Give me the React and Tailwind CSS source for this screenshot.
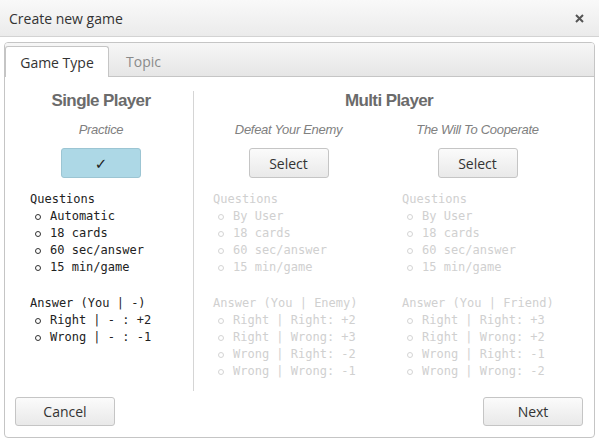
import React from "react";

const mono = { fontFamily: '"DejaVu Sans Mono", "Liberation Mono", monospace' };

function Item({ children, faded }) {
  return (
    <div className="flex items-center h-[17px]">
      <span
        className={
          "ml-[5px] w-[6px] h-[6px] rounded-full border " +
          (faded ? "border-[#d4d4d4]" : "border-[#333]")
        }
      />
      <span className="ml-[9px] whitespace-pre">{children}</span>
    </div>
  );
}

function Info({ faded, items, answerHead, answers }) {
  return (
    <div
      className={"text-[12px] leading-[17px] " + (faded ? "text-[#d0d0d0]" : "text-[#222]")}
      style={mono}
    >
      <div className="h-[17px] whitespace-pre">Questions</div>
      {items.map((t) => (
        <Item key={t} faded={faded}>{t}</Item>
      ))}
      <div className="h-[17px] mt-[19px] whitespace-pre">{answerHead}</div>
      {answers.map((t) => (
        <Item key={t} faded={faded}>{t}</Item>
      ))}
    </div>
  );
}

function Btn({ children, className = "" }) {
  return (
    <div
      className={
        "flex items-center justify-center rounded-[3px] border border-[#c5c5c5] bg-gradient-to-b from-[#fbfbfb] to-[#e9e9e9] text-[14px] text-[#333] " +
        className
      }
    >
      {children}
    </div>
  );
}

export default function App() {
  return (
    <div
      className="w-[599px] h-[442px] bg-white overflow-hidden"
      style={{ fontFamily: '"Open Sans", "DejaVu Sans", sans-serif' }}
    >
      <div className="h-[37px] border-b border-[#d3d3d3] bg-gradient-to-b from-[#f9f9f9] to-[#ebebeb] flex items-center justify-between pl-[9px] pr-[15px]">
        <span className="text-[14px] text-[#333]">Create new game</span>
        <svg width="9" height="9" viewBox="0 0 9 9">
          <path d="M1 1L8 8M8 1L1 8" stroke="#555" strokeWidth="2" />
        </svg>
      </div>

      <div className="ml-[4px] mt-[5px] w-[591px] h-[396px] border border-[#c5c5c5] rounded-[4px] flex flex-col">
        <div className="h-[34px] flex items-end border-b border-[#c5c5c5] bg-gradient-to-b from-[#f6f6f6] to-[#e6e6e6] rounded-t-[3px]">
          <div className="-mb-px h-[31px] w-[104px] bg-white border border-b-0 border-[#c5c5c5] rounded-t-[3px] flex items-center justify-center text-[14px] text-[#333]">
            Game Type
          </div>
          <div className="-mb-px h-[31px] ml-[2px] px-[15px] flex items-center text-[14px] text-[#8a8a8a]">
            Topic
          </div>
        </div>

        <div className="flex mt-[14px] h-[300px]">
          <div className="w-[189px] border-r border-[#d5d5d5] pl-[4px] flex flex-col">
            <div
              className="h-[20px] leading-[20px] text-center text-[17px] font-bold text-[#6b6b6b] tracking-[-0.6px]"
              style={{ fontFamily: '"Liberation Sans", Arial, sans-serif' }}
            >
              Single Player
            </div>
            <div
              className="mt-[10px] h-[18px] leading-[18px] text-center italic text-[13px] text-[#808080] tracking-[-0.3px]"
              style={{ fontFamily: '"Liberation Sans", Arial, sans-serif' }}
            >
              Practice
            </div>
            <div className="mt-[9px] flex justify-center">
              <div className="w-[80px] h-[30px] rounded-[3px] border border-[#9cc5d3] bg-[#add8e6] flex items-center justify-center text-[15px] text-[#222]">
                ✓
              </div>
            </div>
            <div className="mt-[13px] pl-[21px]">
              <Info
                items={["Automatic", "18 cards", "60 sec/answer", "15 min/game"]}
                answerHead="Answer (You | -)"
                answers={["Right | - : +2", "Wrong | - : -1"]}
              />
            </div>
          </div>

          <div className="flex-1 flex flex-col">
            <div
              className="h-[20px] leading-[20px] text-center text-[17px] font-bold text-[#6b6b6b] tracking-[-0.6px] pr-[10px]"
              style={{ fontFamily: '"Liberation Sans", Arial, sans-serif' }}
            >
              Multi Player
            </div>
            <div className="grid grid-cols-[189px_189px]">
              {[
                {
                  sub: "Defeat Your Enemy",
                  head: "Answer (You | Enemy)",
                  ans: ["Right | Right: +2", "Right | Wrong: +3", "Wrong | Right: -2", "Wrong | Wrong: -1"],
                },
                {
                  sub: "The Will To Cooperate",
                  head: "Answer (You | Friend)",
                  ans: ["Right | Right: +3", "Right | Wrong: +2", "Wrong | Right: -1", "Wrong | Wrong: -2"],
                },
              ].map((c) => (
                <div key={c.sub} className="flex flex-col">
                  <div
                    className="mt-[10px] h-[18px] leading-[18px] text-center italic text-[13px] text-[#808080] tracking-[-0.3px]"
                    style={{ fontFamily: '"Liberation Sans", Arial, sans-serif' }}
                  >
                    {c.sub}
                  </div>
                  <div className="mt-[9px] flex justify-center">
                    <Btn className="w-[80px] h-[30px]">Select</Btn>
                  </div>
                  <div className="mt-[13px] pl-[19px]">
                    <Info
                      faded
                      items={["By User", "18 cards", "60 sec/answer", "15 min/game"]}
                      answerHead={c.head}
                      answers={c.ans}
                    />
                  </div>
                </div>
              ))}
            </div>
          </div>
        </div>

        <div className="mt-[6px] flex justify-between pl-[10px] pr-[11px]">
          <Btn className="w-[100px] h-[29px]">Cancel</Btn>
          <Btn className="w-[100px] h-[29px]">Next</Btn>
        </div>
      </div>
    </div>
  );
}
